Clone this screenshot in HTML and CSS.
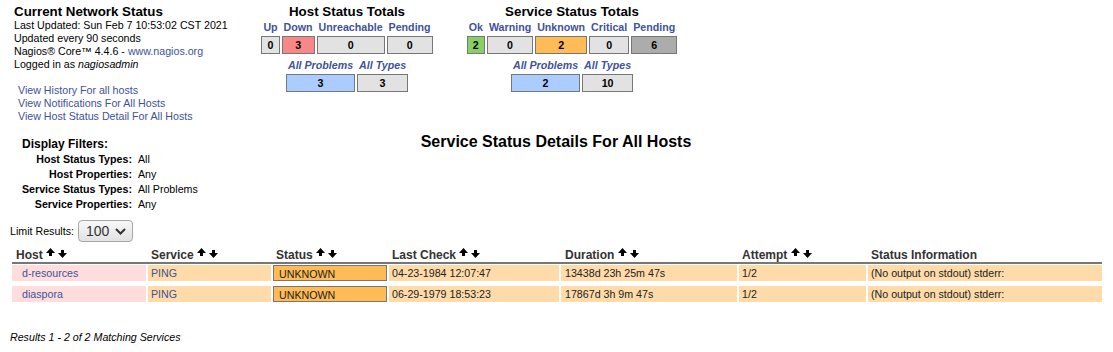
FILE: index.html
```html
<!DOCTYPE html>
<html lang="en">
<head>
    <meta charset="UTF-8">
    <title>Current Network Status</title>
    <link rel="stylesheet" href="styles.css">
</head>
<body>
<div class="page">
    <div class="top">
        <div class="info">
            <div class="info-title">Current Network Status</div>
            <div class="info-line">Last Updated: Sun Feb 7 10:53:02 CST 2021</div>
            <div class="info-line">Updated every 90 seconds</div>
            <div class="info-line">Nagios&reg; Core&trade; 4.4.6 - <a href="#">www.nagios.org</a></div>
            <div class="info-line">Logged in as <i>nagiosadmin</i></div>
            <div class="links">
                <a href="#">View History For all hosts</a>
                <a href="#">View Notifications For All Hosts</a>
                <a href="#">View Host Status Detail For All Hosts</a>
            </div>
        </div>

        <div class="totals host-totals">
            <div class="totals-title">Host Status Totals</div>
            <table class="totals-table">
                <tr><th>Up</th><th>Down</th><th>Unreachable</th><th>Pending</th></tr>
                <tr><td>0</td><td class="bg-down">3</td><td>0</td><td>0</td></tr>
            </table>
            <table class="totals-table second">
                <tr><th><i>All Problems</i></th><th><i>All Types</i></th></tr>
                <tr><td class="bg-problems">3</td><td>3</td></tr>
            </table>
        </div>

        <div class="totals service-totals">
            <div class="totals-title">Service Status Totals</div>
            <table class="totals-table">
                <tr><th>Ok</th><th>Warning</th><th>Unknown</th><th>Critical</th><th>Pending</th></tr>
                <tr><td class="bg-ok">2</td><td>0</td><td class="bg-unknown">2</td><td>0</td><td class="bg-pending">6</td></tr>
            </table>
            <table class="totals-table second">
                <tr><th><i>All Problems</i></th><th><i>All Types</i></th></tr>
                <tr><td class="bg-problems">2</td><td>10</td></tr>
            </table>
        </div>
    </div>

    <div class="band">
        <div class="filters">
            <div class="filters-title">Display Filters:</div>
            <div class="filter-label">Host Status Types:</div><div>All</div>
            <div class="filter-label">Host Properties:</div><div>Any</div>
            <div class="filter-label">Service Status Types:</div><div>All Problems</div>
            <div class="filter-label">Service Properties:</div><div>Any</div>
        </div>
        <div class="page-title">Service Status Details For All Hosts</div>
        <div></div>
    </div>

    <div class="limit">
        <span>Limit Results:</span>
        <div class="select">
            <span>100</span>
            <svg width="11" height="7" viewBox="0 0 11 7"><path d="M1 1 L5.5 5.5 L10 1" fill="none" stroke="#333" stroke-width="2"/></svg>
        </div>
    </div>

    <div class="status">
        <div class="status-row status-head">
            <div class="col-host">Host <svg class="sort" width="21" height="10" viewBox="0 0 21 10"><polygon points="4.5,0 9,5 6,5 6,8 3,8 3,5 0,5"/><polygon points="15,2 18,2 18,5 21,5 16.5,10 12,5 15,5"/></svg></div>
            <div>Service <svg class="sort" width="21" height="10" viewBox="0 0 21 10"><polygon points="4.5,0 9,5 6,5 6,8 3,8 3,5 0,5"/><polygon points="15,2 18,2 18,5 21,5 16.5,10 12,5 15,5"/></svg></div>
            <div>Status <svg class="sort" width="21" height="10" viewBox="0 0 21 10"><polygon points="4.5,0 9,5 6,5 6,8 3,8 3,5 0,5"/><polygon points="15,2 18,2 18,5 21,5 16.5,10 12,5 15,5"/></svg></div>
            <div>Last Check <svg class="sort" width="21" height="10" viewBox="0 0 21 10"><polygon points="4.5,0 9,5 6,5 6,8 3,8 3,5 0,5"/><polygon points="15,2 18,2 18,5 21,5 16.5,10 12,5 15,5"/></svg></div>
            <div class="col-dur">Duration <svg class="sort" width="21" height="10" viewBox="0 0 21 10"><polygon points="4.5,0 9,5 6,5 6,8 3,8 3,5 0,5"/><polygon points="15,2 18,2 18,5 21,5 16.5,10 12,5 15,5"/></svg></div>
            <div>Attempt <svg class="sort" width="21" height="10" viewBox="0 0 21 10"><polygon points="4.5,0 9,5 6,5 6,8 3,8 3,5 0,5"/><polygon points="15,2 18,2 18,5 21,5 16.5,10 12,5 15,5"/></svg></div>
            <div>Status Information</div>
        </div>

        <div class="status-body">
            <div class="status-row">
                <div class="cell-host"><a href="#">d-resources</a></div>
                <div class="cell"><a href="#">PING</a></div>
                <div class="cell-state">UNKNOWN</div>
                <div class="cell">04-23-1984 12:07:47</div>
                <div class="cell col-dur">13438d 23h 25m 47s</div>
                <div class="cell">1/2</div>
                <div class="cell">(No output on stdout) stderr:</div>
            </div>
            <div class="status-row">
                <div class="cell-host"><a href="#">diaspora</a></div>
                <div class="cell"><a href="#">PING</a></div>
                <div class="cell-state">UNKNOWN</div>
                <div class="cell">06-29-1979 18:53:23</div>
                <div class="cell col-dur">17867d 3h 9m 47s</div>
                <div class="cell">1/2</div>
                <div class="cell">(No output on stdout) stderr:</div>
            </div>
        </div>
    </div>

    <div class="results"><i>Results 1 - 2 of 2 Matching Services</i></div>
</div>
</body>
</html>
```

FILE: styles.css
```css
body {
    margin: 0;
    font-family: "Liberation Sans", Arial, sans-serif;
    font-size: 8pt;
    color: #000;
    background: #fff;
}

a {
    color: #40529b;
    text-decoration: none;
}

.page {
    padding: 4px 11px 0 10px;
}

.top {
    display: flex;
    align-items: flex-start;
}

.info {
    width: 233px;
    padding-left: 4px;
}

.info-title {
    font-size: 10pt;
    font-weight: bold;
    line-height: 15px;
}

.info-line {
    line-height: 13px;
}

.links {
    margin-top: 13px;
    padding-left: 4px;
    line-height: 13px;
}

.links a {
    display: block;
}

.totals {
    text-align: center;
}

.host-totals {
    width: 200px;
}

.service-totals {
    width: 240px;
    margin-left: 5px;
}

.totals-title {
    font-size: 10pt;
    font-weight: bold;
    line-height: 15px;
}

.totals-table {
    margin: 0 auto;
    border-spacing: 2px;
    font-weight: bold;
}

.totals-table.second {
    margin-top: 1px;
}

.totals-table th {
    color: #40529b;
    padding: 0 2px;
    line-height: 13px;
    white-space: nowrap;
}

.totals-table td {
    border: 1px solid #777;
    background: #e2e2e2;
    height: 16px;
    line-height: 16px;
    padding: 0;
    text-align: center;
}

.bg-down { background: #f88888 !important; }
.bg-ok { background: #88d066 !important; }
.bg-unknown { background: #ffbb55 !important; }
.bg-pending { background: #acacac !important; }
.bg-problems { background: #aaccff !important; }

.band {
    display: grid;
    grid-template-columns: 1fr auto 1fr;
    margin-top: 9px;
}

.filters {
    display: grid;
    grid-template-columns: auto auto;
    justify-content: start;
    column-gap: 6px;
    padding: 5px 0 0 12px;
    line-height: 15px;
}

.filters-title {
    grid-column: 1 / 3;
    font-size: 12px;
    font-weight: bold;
    line-height: 15px;
}

.filter-label {
    font-weight: bold;
    text-align: right;
}

.page-title {
    padding-top: 1px;
    font-size: 16px;
    font-weight: bold;
    line-height: 18px;
}

.limit {
    display: flex;
    align-items: center;
    gap: 4px;
    margin-top: 8px;
    height: 22px;
}

.select {
    display: flex;
    align-items: center;
    justify-content: space-between;
    box-sizing: border-box;
    width: 55px;
    height: 22px;
    padding: 0 6px 0 7px;
    border: 1px solid #a6a6a6;
    border-radius: 4px;
    background: linear-gradient(#f8f8f8, #e2e2e2);
    font-size: 14px;
    color: #333;
}

.status {
    margin: 3px 0 0 2px;
}

.status-row {
    display: grid;
    grid-template-columns: 134px 123px 114px 170px 176px 127px 1fr;
    column-gap: 2px;
}

.status-head {
    font-size: 12px;
    font-weight: bold;
    color: #333;
    line-height: 14px;
    padding-top: 3px;
    border-bottom: 2px solid #777;
}

.status-head > div {
    padding-left: 3px;
    white-space: nowrap;
}

.status-head .col-host,
.status-head .col-dur {
    padding-left: 4px;
}

.sort {
    vertical-align: 1px;
}

.status-body {
    display: flex;
    flex-direction: column;
    gap: 5px;
    padding-top: 1px;
}

.status-body .status-row > div {
    height: 16px;
    line-height: 16px;
    color: #222;
    white-space: nowrap;
}

.cell-host {
    background: #ffdddd;
    padding-left: 10px;
}

.cell {
    background: #fedba8;
    padding-left: 3px;
}

.cell.col-dur {
    padding-left: 4px;
}

.status-body .cell-state {
    box-sizing: border-box;
    background: #ffbb55;
    border: 1px solid #777;
    line-height: 14px;
    padding-left: 5px;
    color: #000;
}

.results {
    margin-top: 29px;
    line-height: 13px;
}
```
